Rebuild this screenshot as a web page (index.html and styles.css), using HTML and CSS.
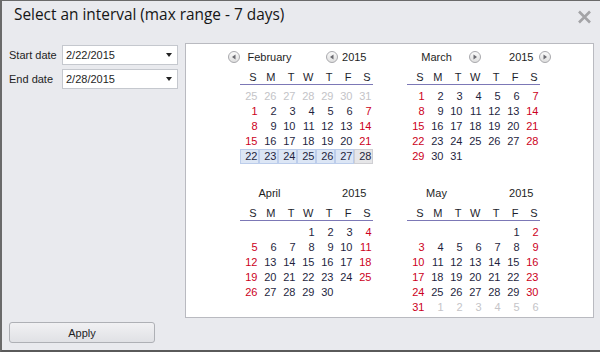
FILE: index.html
```html
<!DOCTYPE html>
<html>
<head>
<meta charset="utf-8">
<link rel="stylesheet" href="styles.css">
</head>
<body>
<div class="dialog">
  <div class="titlebar">
    <span class="title">Select an interval (max range - 7 days)</span>
    <svg class="close" width="15" height="14" viewBox="0 0 15 14"><path d="M2 1.5 L13 12.5 M13 1.5 L2 12.5" stroke="#a3a3a6" stroke-width="2.6" fill="none"/></svg>
  </div>
  <div class="content">
    <div class="form">
      <div class="row"><label>Start date</label><div class="input"><span>2/22/2015</span><i class="caret"></i></div></div>
      <div class="row"><label>End date</label><div class="input"><span>2/28/2015</span><i class="caret"></i></div></div>
    </div>
    <div class="panel">
      <div class="months" id="months"></div>
    </div>
  </div>
  <div class="footer">
    <button class="apply">Apply</button>
  </div>
</div>
<script>
var data = [
  {name:"February", year:2015, first:0, days:28, prevDays:31, arrows:[["prev",-12],["prev",86]], sel:[22,28]},
  {name:"March", year:2015, first:0, days:31, prevDays:28, arrows:[["next",62],["next",132]], showPrev:false},
  {name:"April", year:2015, first:3, days:30, prevDays:31, arrows:[]},
  {name:"May", year:2015, first:5, days:31, prevDays:30, arrows:[], trail:true}
];
var html = "";
data.forEach(function(m, idx){
  var h = '<div class="month"><div class="mhead"><span class="mname">'+m.name+'</span><span class="myear">'+m.year+'</span>';
  m.arrows.forEach(function(a){
    var tri = a[0]=="prev" ? 'M7.5 3.5 L4 6 L7.5 8.5 Z' : 'M4.5 3.5 L8 6 L4.5 8.5 Z';
    h += '<svg class="arrow" style="left:'+a[1]+'px" width="12" height="12" viewBox="0 0 12 12"><defs><linearGradient id="g'+idx+a[1]+'" x1="0" y1="0" x2="0" y2="1"><stop offset="0" stop-color="#fbfbfb"/><stop offset="1" stop-color="#dedede"/></linearGradient></defs><circle cx="6" cy="6" r="5.5" fill="url(#g'+idx+a[1]+')" stroke="#a9a9ad"/><path d="'+tri+'" fill="#6a6a70"/></svg>';
  });
  h += '</div><div class="dow">';
  "SMTWTFS".split("").forEach(function(c){ h += '<span>'+c+'</span>'; });
  h += '</div><div class="days">';
  var cells = [];
  if (idx==0) { for (var i=25;i<=31;i++) cells.push({d:i,o:1}); }
  for (var i=0;i<m.first;i++) cells.push({d:"",o:0});
  for (var d=1; d<=m.days; d++) cells.push({d:d,o:0});
  if (m.trail) { var n=1; while (cells.length%7) cells.push({d:n++,o:1}); }
  cells.forEach(function(c, i){
    var cls = [];
    var col = i%7;
    var selected = m.sel && !c.o && c.d>=m.sel[0] && c.d<=m.sel[1];
    if (c.o) cls.push("other");
    else if (selected) cls.push(c.d==m.sel[1] ? "selend" : "sel");
    else if (col==0 || col==6) cls.push("we");
    h += '<span class="'+cls.join(" ")+'">'+c.d+'</span>';
  });
  h += '</div></div>';
  html += h;
});
document.getElementById("months").innerHTML = html;
</script>
</body>
</html>
```

FILE: styles.css
```css
html, body {
  margin: 0;
  padding: 0;
}
body {
  width: 600px;
  height: 352px;
  overflow: hidden;
  background: #e9eaee;
}
.dialog {
  box-sizing: border-box;
  width: 600px;
  height: 352px;
  border-top: 1px solid #6a6a6a;
  border-left: 2px solid #6a6a6a;
  border-bottom: 2px solid #5a5a5a;
  background: #e9eaee;
  font-family: "Liberation Sans", Arial, sans-serif;
  font-size: 11px;
  color: #1e1e1e;
  display: flex;
  flex-direction: column;
}
.titlebar {
  height: 42px;
  display: flex;
  align-items: flex-start;
  padding: 0 8px 0 12px;
}
.title {
  font-family: "Open Sans", sans-serif;
  font-size: 15.4px;
  color: #161616;
  margin-top: 3px;
}
.close {
  margin-left: auto;
  margin-top: 9px;
}
.content {
  display: flex;
  height: 275px;
}
.form {
  width: 174px;
  padding: 2px 0 0 7px;
  display: flex;
  flex-direction: column;
  gap: 4px;
}
.row {
  display: flex;
  align-items: center;
  height: 20px;
}
.row label {
  width: 53px;
  font-size: 11px;
  color: #1e1e1e;
}
.input {
  box-sizing: border-box;
  width: 116px;
  height: 20px;
  background: #fff;
  border: 1px solid #c5c8ce;
  display: flex;
  align-items: center;
  padding: 0 0 0 3px;
  font-size: 11px;
  color: #1e1e1e;
}
.caret {
  margin-left: auto;
  margin-right: 5px;
  width: 0;
  height: 0;
  border-left: 3.5px solid transparent;
  border-right: 3.5px solid transparent;
  border-top: 4px solid #222;
}
.panel {
  box-sizing: border-box;
  width: 409px;
  height: 275px;
  margin-left: 2px;
  background: #fff;
  border: 1px solid #b9bac0;
  padding-top: 3px;
}
.months {
  display: grid;
  grid-template-columns: 133px 133px;
  column-gap: 34px;
  row-gap: 4px;
  justify-content: center;
}
.month {
  width: 133px;
}
.mhead {
  position: relative;
  height: 20px;
  display: flex;
  align-items: center;
  font-size: 11px;
  color: #1e1e1e;
}
.mname {
  width: 60px;
  text-align: center;
}
.myear {
  margin-left: auto;
  padding-right: 6px;
}
.arrow {
  position: absolute;
  top: 4px;
}
.dow {
  display: grid;
  grid-template-columns: repeat(7, 19px);
  height: 14px;
  line-height: 14px;
  border-bottom: 1px solid #7c78b6;
  margin-top: 3px;
}
.dow span {
  text-align: right;
  padding-right: 2px;
  color: #1e1e2e;
}
.days {
  display: grid;
  grid-template-columns: repeat(7, 19px);
  grid-auto-rows: 15px;
  margin-top: 4px;
  min-height: 90px;
}
.days span {
  text-align: right;
  padding-right: 1px;
  line-height: 15px;
  color: #1f1f3f;
}
.days span.we {
  color: #cc0022;
}
.days span.other {
  color: #c4c4c8;
}
.days span.sel {
  background: #dce6f5;
  box-shadow: inset 0 0 0 1px #bccdeb;
}
.days span.selend {
  background: #e6e6e8;
  box-shadow: inset 0 0 0 1px #cfcfd3;
}
.footer {
  padding: 4px 0 0 7px;
}
.apply {
  box-sizing: border-box;
  width: 146px;
  height: 21px;
  border: 1px solid #aeb0b5;
  border-radius: 3px;
  background: linear-gradient(#f1f1f3, #e0e1e5);
  font-family: "Liberation Sans", Arial, sans-serif;
  font-size: 11px;
  color: #1e1e1e;
  padding: 0;
}
```
